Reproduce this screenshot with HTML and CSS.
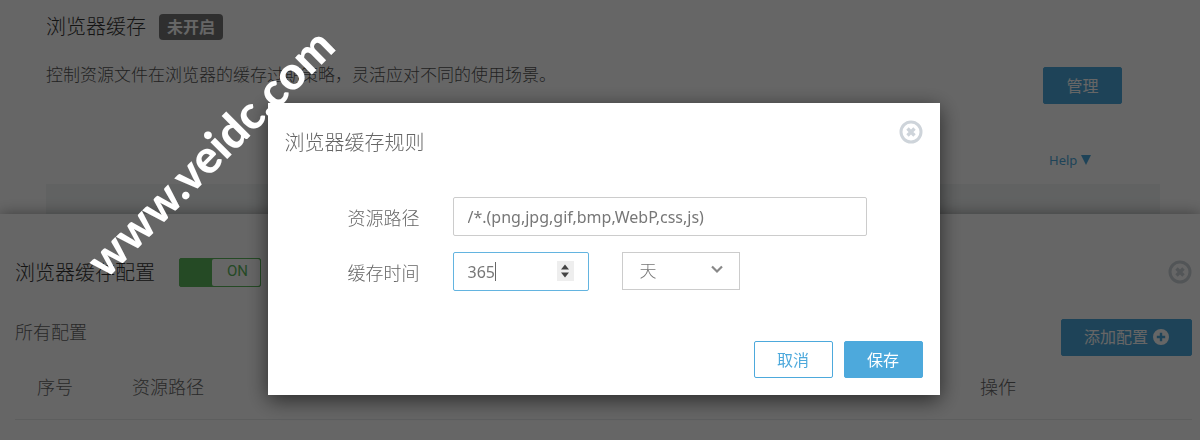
FILE: index.html
```html
<!DOCTYPE html>
<html lang="zh-CN">
<head>
<meta charset="utf-8">
<title>浏览器缓存规则</title>
<link rel="stylesheet" href="styles.css">
</head>
<body>
<main class="page">
  <section class="feature">
    <div class="feature-text">
      <div class="feature-head">
        <h1 class="title">浏览器缓存</h1>
        <span class="badge">未开启</span>
      </div>
      <p class="desc">控制资源文件在浏览器的缓存过期策略，灵活应对不同的使用场景。</p>
    </div>
    <div class="feature-side">
      <button class="btn" type="button">管理</button>
      <a class="help" href="#">Help <svg width="10" height="10" viewBox="0 0 10 10" aria-hidden="true"><path d="M0 0h10L5 10z" fill="currentColor"/></svg></a>
    </div>
  </section>
  <div class="strip"></div>
  <section class="drawer">
    <header class="drawer-head">
      <h2 class="title">浏览器缓存配置</h2>
      <button class="switch" type="button" role="switch" aria-checked="true"><span class="switch-label">ON</span></button>
      <button class="close" type="button" aria-label="关闭">
        <svg width="24" height="24" viewBox="0 0 24 24" aria-hidden="true"><circle cx="12" cy="12" r="10" fill="none" stroke="currentColor" stroke-width="3"/><path d="M8.500 8.500l7 7M15.500 8.500l-7 7" stroke="currentColor" stroke-width="3.400"/></svg>
      </button>
    </header>
    <div class="drawer-bar">
      <span>所有配置</span>
      <button class="btn btn-add" type="button">添加配置
        <svg width="16" height="16" viewBox="0 0 16 16" aria-hidden="true"><path fill="currentColor" fill-rule="evenodd" d="M8 0a8 8 0 1 0 0 16A8 8 0 0 0 8 0zM6.800 3.800h2.400v3h3v2.400h-3v3H6.800v-3h-3V6.800h3z"/></svg>
      </button>
    </div>
    <table class="rules">
      <thead><tr><th class="col-no">序号</th><th>资源路径</th><th class="col-act">操作</th></tr></thead>
    </table>
  </section>
</main>

<div class="overlay">
  <form class="modal" role="dialog" aria-labelledby="dlg-title">
    <header class="modal-head">
      <h2 class="modal-title" id="dlg-title">浏览器缓存规则</h2>
      <button class="close" type="button" aria-label="关闭">
        <svg width="24" height="24" viewBox="0 0 24 24" aria-hidden="true"><circle cx="12" cy="12" r="10" fill="none" stroke="currentColor" stroke-width="3"/><path d="M8.500 8.500l7 7M15.500 8.500l-7 7" stroke="currentColor" stroke-width="3.400"/></svg>
      </button>
    </header>
    <div class="fields">
      <label class="label" for="path">资源路径</label>
      <input class="control" id="path" type="text" value="/*.(png,jpg,gif,bmp,WebP,css,js)">
      <label class="label" for="ttl">缓存时间</label>
      <div class="ttl-row">
        <div class="number">
          <input class="control control-active" id="ttl" type="number" value="365">
          <span class="caret"></span>
          <span class="stepper"><svg width="8" height="14" viewBox="0 0 8 14" aria-hidden="true"><path d="M0 5.500L4 0.500l4 5zM0 8.500h8l-4 5z" fill="#444"/></svg></span>
        </div>
        <div class="unit">
          <select class="control select" aria-label="单位"><option>天</option></select>
          <svg class="chevron" width="12" height="9" viewBox="0 0 12 9" aria-hidden="true"><path d="M1 1.500l5 5 5-5" fill="none" stroke="#888" stroke-width="2.200"/></svg>
        </div>
      </div>
    </div>
    <footer class="modal-foot">
      <button class="btn btn-outline" type="button">取消</button>
      <button class="btn" type="submit">保存</button>
    </footer>
  </form>
</div>
<div class="watermark">www.veidc.com</div>
</body>
</html>
```
FILE: styles.css
```css
* { box-sizing: border-box; }

body {
  margin: 0;
  overflow: hidden;
  background: #fff;
  color: #666;
  font: 300 18px/24px "Noto Sans", "Noto Sans CJK SC", sans-serif;
}

h1, h2, p { margin: 0; font-weight: 300; }
button, input, select { font: inherit; color: inherit; }
button { cursor: pointer; }

.page { min-height: 100vh; display: flex; flex-direction: column; }

.feature {
  display: flex;
  justify-content: space-between;
  height: 184px;
  padding: 13px 78px 0 46px;
}
.feature-head { display: flex; align-items: center; gap: 13px; height: 28px; }
.title { font-size: 20px; line-height: 28px; color: #333; }
.badge {
  padding: 0 8px;
  border-radius: 4px;
  background: #777;
  color: #fff;
  font-size: 16px;
  font-weight: 700;
  line-height: 26px;
}
.desc { margin-top: 22px; font-size: 17px; color: #555; }
.feature-side { padding-top: 54px; }
.help {
  display: block;
  margin: 44px 0 0 6px;
  color: #4da9dc;
  font-size: 13px;
  font-weight: 400;
  text-decoration: none;
}
.strip { height: 30px; margin: 0 40px 0 46px; background: #f2f5f5; }

.btn {
  min-width: 79px;
  height: 37px;
  padding: 0 22px;
  border: 1px solid #4da9dc;
  border-radius: 2px;
  background: #4da9dc;
  color: #fff;
  font-size: 16px;
  font-weight: 400;
}
.btn-outline { background: #fff; color: #4da9dc; }
.btn-add { display: flex; align-items: center; gap: 5px; }

.drawer {
  position: relative;
  flex: 1;
  padding: 42px 8px 0 15px;
  background: #fff;
  box-shadow: 0 0 14px rgba(0, 0, 0, .4);
}
.drawer-head { display: flex; align-items: center; height: 32px; }
.drawer-head .title { padding-top: 2px; }
.switch {
  width: 82px;
  height: 29px;
  margin-left: 24px;
  padding: 0 0 0 32px;
  border: 1px solid #5cb85c;
  border-radius: 2px;
  background: #5cb85c;
}
.switch-label {
  display: block;
  height: 27px;
  padding-left: 3px;
  border-radius: 2px;
  background: #fff;
  color: #5cb85c;
  font: 400 15px/24px Roboto, sans-serif;
}
.close {
  display: flex;
  margin-left: auto;
  padding: 0;
  border: 0;
  background: none;
  color: #ced4da;
}
.drawer-bar {
  display: flex;
  justify-content: space-between;
  align-items: center;
  height: 36px;
  margin-top: 31px;
}
.drawer-bar > span { margin-bottom: 10px; }
.rules { width: 100%; border-collapse: collapse; table-layout: fixed; }
.rules th {
  height: 64px;
  padding: 0 22px;
  border-bottom: 1px solid #e8eaec;
  font-weight: 300;
  text-align: left;
}
.rules .col-no { width: 95px; }
.rules .col-act { width: 234px; }

.overlay {
  position: fixed;
  inset: 0;
  display: flex;
  justify-content: center;
  align-items: flex-start;
  padding: 103px 0 0 7px;
  background: rgba(0, 0, 0, .6);
}
.modal {
  width: 56vw;
  min-width: 560px;
  padding: 17px;
  background: #fff;
  box-shadow: 0 5px 20px rgba(0, 0, 0, .6);
}
.modal-head { display: flex; align-items: flex-start; height: 48px; }
.modal-title { padding-top: 9px; font-size: 20px; line-height: 28px; }
.fields {
  display: grid;
  grid-template-columns: 73px 1fr;
  gap: 16px 32px;
  align-items: center;
  margin: 29px 56px 50px 63px;
}
.label { padding-top: 2px; white-space: nowrap; }
.control {
  display: block;
  width: 100%;
  height: 39px;
  padding: 0 14px;
  border: 1px solid #ccc;
  border-radius: 2px;
  outline: 0;
  background: #fff;
  font-size: 16px;
  font-weight: 400;
  color: #777;
}
.control-active { border-color: #63b4e0; appearance: textfield; }
.ttl-row { display: flex; gap: 33px; }
.number { position: relative; width: 136px; }
.caret {
  position: absolute;
  left: 42px;
  top: 10px;
  width: 1px;
  height: 19px;
  background: #666;
}
.stepper {
  position: absolute;
  right: 15px;
  top: 9px;
  display: grid;
  place-items: center;
  width: 17px;
  height: 20px;
  background: #eee;
}
.unit { position: relative; width: 118px; }
.select { height: 38px; padding: 0 17px; appearance: none; border-radius: 0; font-weight: 300; font-size: 17px; }
.chevron { position: absolute; right: 17px; top: 13px; }
.modal-foot { display: flex; justify-content: flex-end; gap: 11px; }

.watermark {
  position: fixed;
  left: 111px;
  top: 237px;
  color: #fff;
  font: 900 46px/48px Lato, sans-serif;
  white-space: nowrap;
  transform: rotate(-45deg);
  transform-origin: 0 100%;
}
```
